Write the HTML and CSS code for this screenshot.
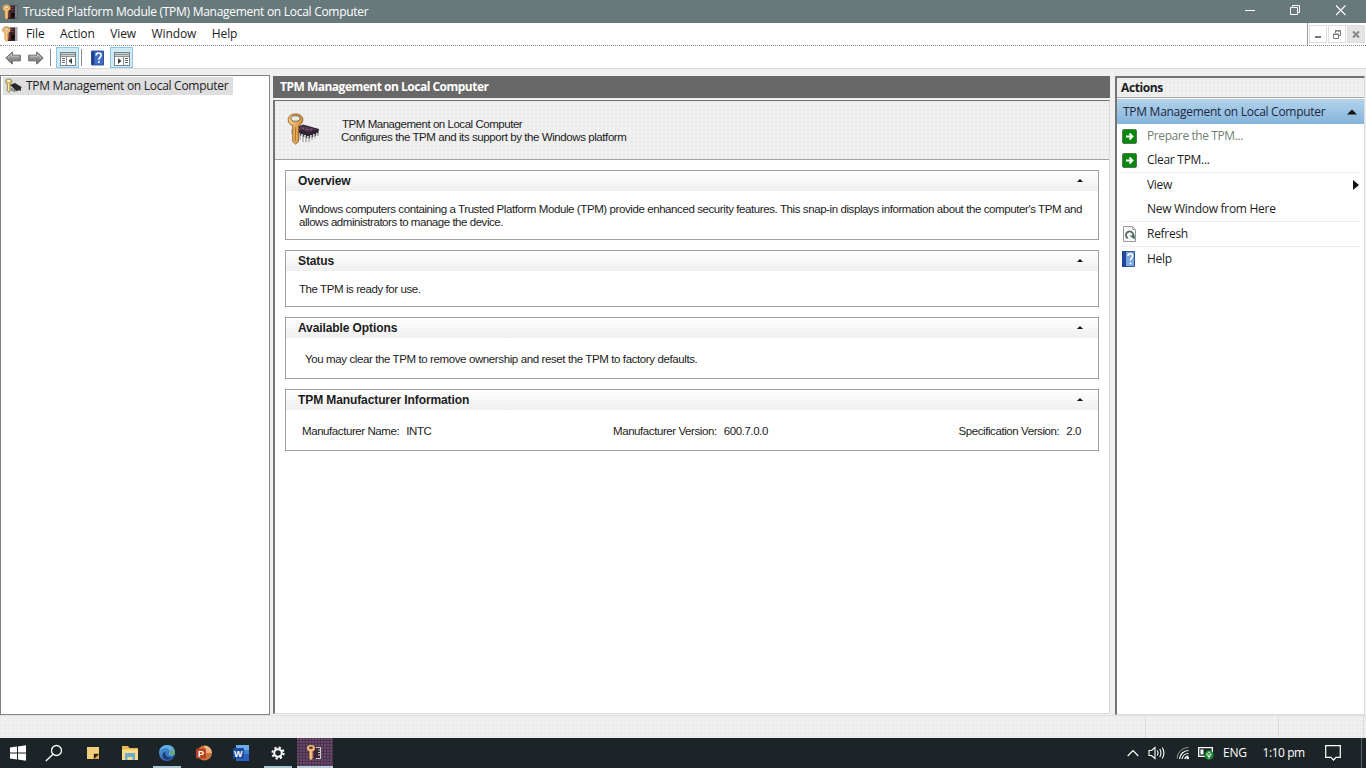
FILE: index.html
```html
<!DOCTYPE html>
<html lang="en">
<head>
<meta charset="utf-8">
<title>TPM Management</title>
<link rel="stylesheet" href="styles.css">
</head>
<body>
<svg width="0" height="0" class="defs">
  <defs>
    <linearGradient id="gold" x1="0" x2="1"><stop offset="0" stop-color="#f9d088"/><stop offset="1" stop-color="#d18f3c"/></linearGradient>
    <linearGradient id="grey" x1="0" x2="0" y1="0" y2="1"><stop offset="0" stop-color="#b4b4b4"/><stop offset="1" stop-color="#727272"/></linearGradient>
    <linearGradient id="edge" x1="0" x2="1" y1="0" y2="1"><stop offset="0" stop-color="#4fa0dc"/><stop offset="1" stop-color="#2752a8"/></linearGradient>
    <symbol id="tpm" viewBox="0 0 16 16">
      <path d="M7 1.500h6v13.500H6z" fill="#38242b"/>
      <path d="M8.500 3.500h3M8.500 5.500h3" stroke="#8c3342"/>
      <path d="M8 8v6" stroke="#7d2636" stroke-width="1.200"/>
      <path d="M12.500 2h3M12.500 4h3M12.500 6h3M12.500 8h3M12.500 10h3M12.500 12h3M12.500 14h3" stroke="#333" stroke-width=".9"/>
      <path d="M13 3h2M13 5h2M13 7h2M13 9h2M13 11h2M13 13h2" stroke="#aaa" stroke-width=".9"/>
      <path d="M9 9h3.500v4.500H9z" fill="#0d0d0d"/>
      <path d="M4.500 .6C2 .6.6 2 .6 4c0 1.500.9 2.600 2.300 3.100V14l1.700 1.500L6 14V7.100C7.500 6.600 8.400 5.500 8.400 4 8.400 2 7 .6 4.500.6z" fill="#f5c37b" stroke="#b5742f" stroke-width=".6"/>
      <ellipse cx="4.500" cy="3.200" rx="2.300" ry="1.200" fill="#f3efe4" stroke="#8a6a3a" stroke-width=".5"/>
    </symbol>
    <symbol id="book" viewBox="0 0 14 16">
      <path d="M.5.500h13v15H.5z" fill="#3f6fc6" stroke="#26458f"/>
      <path d="M1 1h2.500v14H1z" fill="#1d3e8c"/>
      <path d="M5.500 5.200C5.500 3.500 6.700 2.700 8.200 2.700s2.700.9 2.700 2.400c0 2.200-2.500 2.200-2.500 4.700" fill="none" stroke="#fff" stroke-width="1.700"/>
      <path d="M7.500 11.300h1.900v1.900H7.500z" fill="#fff"/>
    </symbol>
    <symbol id="go" viewBox="0 0 15 15">
      <rect x=".5" y=".5" width="14" height="14" rx="1.500" fill="#0a850d" stroke="#4d7d50"/>
      <path d="M4 7.500h6M7.500 4.500l3 3-3 3" fill="none" stroke="#fff" stroke-width="1.800"/>
    </symbol>
    <symbol id="arrow" viewBox="0 0 16 14">
      <path d="M.8 7 7.300.9V4.200H15.300V9.800H7.300V13.100z" fill="url(#grey)" stroke="#666" stroke-width="1"/>
      <path d="M3 6.700 6.500 3.500V5.200H14" fill="none" stroke="#c9c9c9" stroke-width=".8"/>
    </symbol>
  </defs>
</svg>

<div class="screen">
  <header class="titlebar">
    <svg class="ic16"><use href="#tpm"/></svg>
    <span class="title">Trusted Platform Module (TPM) Management on Local Computer</span>
    <svg class="winctl" width="110" height="23" fill="none" stroke="#fff">
      <path d="M5 10.500h10"/><path d="M50.500 7.500h7v7h-7zM52.500 7.500v-2h7v7h-2"/><path d="M96 5.500l9.500 9.500M105.500 5.500 96 15" stroke-width="1.100"/>
    </svg>
  </header>

  <nav class="menubar">
    <svg class="ic16"><use href="#tpm"/></svg>
    <span class="m-file">File</span><span class="m-action">Action</span><span class="m-view">View</span><span class="m-window">Window</span><span class="m-help">Help</span>
    <div class="mdi">
      <i><svg width="17" height="17"><path d="M5 11h6" stroke="#777" stroke-width="2"/></svg></i>
      <i><svg width="17" height="17" fill="none" stroke="#777"><path d="M4.500 8.500h5v4h-5zM4 8h6M6.500 7V5h5v4.500h-2M6 4.700h6"/></svg></i>
      <i class="off"><svg width="17" height="17"><path d="M5 5.500l6 6M11 5.500l-6 6" stroke="#888" stroke-width="2"/></svg></i>
    </div>
  </nav>

  <div class="toolbar">
    <svg class="back" width="16" height="14"><use href="#arrow"/></svg>
    <svg class="fwd" width="16" height="14"><use href="#arrow"/></svg>
    <b class="vsep"></b>
    <span class="tb on"><svg width="16" height="14"><rect x=".5" y=".5" width="15" height="13" fill="#fff" stroke="#7b8285"/><path d="M1 2.500h14" stroke="#8f989b" stroke-width="2"/><path d="M1 4.500h14M6.500 5v8" stroke="#8b9295"/><path d="M2 6.500h3M2 8.500h3M2 10.500h3" stroke="#666"/><path d="M12 6v6L8.500 9z" fill="#444"/></svg></span>
    <b class="vsep second"></b>
    <svg class="help" width="13" height="16" preserveAspectRatio="none"><use href="#book"/></svg>
    <span class="tb on last"><svg width="16" height="14"><rect x=".5" y=".5" width="15" height="13" fill="#fff" stroke="#7b8285"/><path d="M1 2.500h14" stroke="#8f989b" stroke-width="2"/><path d="M1 4.500h14M9.500 5v8" stroke="#8b9295"/><path d="M11 6.500h3M11 8.500h3M11 10.500h3" stroke="#666"/><path d="M4 6v6l3.500-3z" fill="#444"/></svg></span>
  </div>

  <div class="main">
    <aside class="tree">
      <div class="node">
        <svg width="17" height="16" viewBox="0 0 17 16"><path d="M5 7l5-2 6.500 4-1 3-4 1z" fill="#2a2626"/><path d="M7 10v3M9 11v3M11 11.500v2M15.500 10v3" stroke="#444"/><path d="M3.500 1C1.500 1 .6 2 .6 3.500c0 1.200.7 2 1.700 2.300v7L4 14.300l1.200-1.500v-7C6.300 5.400 7 4.600 7 3.500 7 2 5.800 1 3.500 1z" fill="#dcc25c" stroke="#77726a" stroke-width=".7"/><ellipse cx="3.700" cy="2.800" rx="1.500" ry=".9" fill="#fff"/><path d="M3.500 6v7" stroke="#fff3ac"/></svg>
        <span class="tree-text">TPM Management on Local Computer</span>
      </div>
    </aside>

    <section class="center">
      <h1>TPM Management on Local Computer</h1>
      <div class="content">
        <div class="banner">
          <svg width="34" height="34" viewBox="0 0 34 34">
            <path d="M8 15 16 11.500 32 16 31 22 21 26 8 20z" fill="#302334"/>
            <path d="M10 15 16 12.500 29.500 16.300 22 19.500z" fill="#4c3349"/>
            <path d="M11 16l2 .6M15 15l2 .6M19 16l2 .6M23 16l2 .6" stroke="#875c76" stroke-width="1.200"/>
            <path d="M12 20v6M15 21v7M18 22v7M21 23v6M24 22v5M27 21v5M30 20v4M6 16v5" stroke="#f2f2f2" stroke-width="1.600"/>
            <path d="M13 21v6M16 22v7M19 23v6M22 23v6M25 22v5M28 21v4M31 19v4M5 16v5" stroke="#77737a" stroke-width=".8"/>
            <path d="M8.500 1C4 1 1.200 3.200 1.200 6.700c0 3 1.800 5 4.600 6v15.800L8.600 31l2.800-2.500V12.700c2.600-1 4.400-3 4.400-6C15.800 3.200 13 1 8.500 1z" fill="url(#gold)" stroke="#9b6120"/>
            <ellipse cx="8.500" cy="5.500" rx="4.500" ry="2.800" fill="#eeece8" stroke="#6c6049"/>
            <path d="M8.500 14v14" stroke="#b8741f" stroke-width="1.100"/>
          </svg>
          <p><span class="b1">TPM Management on Local Computer</span><span class="b2">Configures the TPM and its support by the Windows platform</span></p>
        </div>

        <div class="cards">
          <article class="overview"><h2><span>Overview</span><i></i></h2>
            <p><span class="o1">Windows computers containing a Trusted Platform Module (TPM) provide enhanced security features. This snap-in displays information about the computer's TPM and</span><span class="o2">allows administrators to manage the device.</span></p></article>
          <article class="status"><h2><span>Status</span><i></i></h2><p><span class="s1">The TPM is ready for use.</span></p></article>
          <article class="options"><h2><span>Available Options</span><i></i></h2><p><span class="a1">You may clear the TPM to remove ownership and reset the TPM to factory defaults.</span></p></article>
          <article class="maker"><h2><span>TPM Manufacturer Information</span><i></i></h2>
            <dl><div class="name"><dt>Manufacturer Name:</dt><dd>INTC</dd></div><div><dt>Manufacturer Version:</dt><dd class="ver">600.7.0.0</dd></div><div class="spec"><dt>Specification Version:</dt><dd>2.0</dd></div></dl></article>
        </div>
      </div>
    </section>

    <aside class="actions">
      <h3>Actions</h3>
      <div class="group"><span>TPM Management on Local Computer</span><svg width="10" height="6"><path d="M0 5.500 5 .5l5 5z" fill="#111"/></svg></div>
      <ul>
        <li class="dim"><svg width="15" height="15"><use href="#go"/></svg><span class="r1">Prepare the TPM...</span></li>
        <li><svg width="15" height="15"><use href="#go"/></svg><span class="r2">Clear TPM...</span></li>
        <li class="line"><b></b><span class="r3">View</span><svg class="more" width="6" height="10"><path d="M0 0l6 5-6 5z" fill="#111"/></svg></li>
        <li><b></b><span class="r4">New Window from Here</span></li>
        <li class="line"><svg width="15" height="16"><path d="M1.500.500h9l3 3v12h-12z" fill="#f8f8f8" stroke="#999"/><path d="M10.500.500v3h3" fill="none" stroke="#aaa"/><path d="M5.800 12.300A3.700 3.700 0 1 1 10.800 11" fill="none" stroke="#55696b" stroke-width="1.800"/><path d="M7.500 9.500h5.200v4z" fill="#2f6a52"/></svg><span class="r5">Refresh</span></li>
        <li class="line"><svg width="15" height="16"><path d="M.5.500h12v15H.5z" fill="#79a7df" stroke="#3156a0"/><path d="M0 0h4v16H0z" fill="#244597"/><path d="M6 5c0-1.500 1-2.300 2.300-2.300s2.300.9 2.300 2.200C10.600 7 8.500 7 8.500 9.500" fill="none" stroke="#fff" stroke-width="1.600"/><path d="M7.600 11.500h1.800v1.800H7.600z" fill="#fff"/></svg><span class="r6">Help</span></li>
      </ul>
    </aside>
  </div>

  <div class="statusbar"><i></i><i></i><i></i></div>

  <footer class="taskbar">
    <div class="apps">
      <span class="start"><svg width="18" height="18"><path d="M1 3.500l7-1v6H1zM9 2.400l8-1.200v7.300H9zM1 9.500h7v6l-7-1zM9 9.500h8v7.300l-8-1.200z" fill="#fff"/></svg></span>
      <span class="search"><svg width="18" height="18" fill="none" stroke="#fff" stroke-width="1.300"><circle cx="11.500" cy="6.500" r="5"/><path d="M8 10.200.9 17"/></svg></span>
      <span><svg width="14" height="14"><path d="M1 1h12v12H1z" fill="#f0d07c"/><path d="M7 7h6v6H7z" fill="#d9ad55"/><path d="M8 8h5l-5 5z" fill="#241f18"/></svg></span>
      <span><svg width="18" height="16"><path d="M1 1h6l1.500 2H17v12H1z" fill="#e9b751"/><path d="M1 4.500h16V15H1z" fill="#f8dc86"/><path d="M4 8h10v7h-2.500v-3h-5v3H4z" fill="#6fa9d6"/></svg></span>
      <span class="run"><svg width="18" height="18"><circle cx="9" cy="9" r="8" fill="url(#edge)"/><path d="M1.300 8C3 3.500 9 3 11 6c1.500 2.300-.7 3.500-.5 4.500.3 1.500 3.500 1.800 6 .2C18 4 13.500 1 9 1 5 1 2 4 1.300 8z" fill="#64aee5"/><path d="M11.500 10.500c-.3-1 1.500-1.500 1-4L16 5.500c1.300 2 1.200 4 .5 5.200-1.500 1-4.500 1-5-.2z" fill="#63aa83"/><path d="M7.500 7.500c-1.500 3 1 7 6.500 6-2.300 2.500-7 3-9 0-1.300-2.500 0-5 2.500-6z" fill="#1b3876"/></svg></span>
      <span><svg width="18" height="18"><circle cx="9.500" cy="9" r="7.500" fill="#c9743f"/><path d="M9.500 1.500A7.500 7.500 0 0 1 17 9H9.500z" fill="#efb384"/><rect x="1" y="4.500" width="10" height="10" rx="1" fill="#b8431c"/><text x="3" y="12.800" class="glyph">P</text></svg></span>
      <span><svg width="18" height="18"><path d="M4 1h13v16H4z" fill="#2a62bd"/><path d="M4 1h13v5H4z" fill="#6daae9"/><path d="M4 6h13v4H4z" fill="#3f83d4"/><rect x="1" y="4" width="11" height="10.500" rx="1" fill="#1d4b9f"/><text x="2" y="12.700" class="glyph">W</text></svg></span>
      <span class="run"><svg width="14" height="14"><circle cx="7" cy="7" r="5.600" fill="none" stroke="#fff" stroke-width="2" stroke-dasharray="2.200 2.198"/><circle cx="7" cy="7" r="3.800" fill="none" stroke="#fff" stroke-width="2"/></svg></span>
      <span class="run active"><svg width="18" height="18"><path d="M8 3.500h6v11H8z" fill="#3c2630"/><path d="M10 3.500h5M14.500 3v12M10 14.500h5M12 6h2M12 8.500h2M12 11h2" stroke="#ccc"/><path d="M5 1C2.500 1 1 2.200 1 4.200c0 1.600 1 2.500 2.400 3v7.300L5 16.200l1.500-1.700V7.200C8 6.700 9 5.800 9 4.200 9 2.200 7.500 1 5 1z" fill="#f6bd74"/><ellipse cx="5" cy="3.800" rx="2" ry="1.200" fill="#5c3545"/></svg></span>
    </div>
    <div class="tray">
      <svg class="chev" width="12" height="8" fill="none" stroke="#fff" stroke-width="1.200"><path d="M.7 7 6 1.500 11.300 7"/></svg>
      <svg class="vol" width="18" height="16" fill="none" stroke="#fff" stroke-width="1.100"><path d="M1 5.500h2.500L7 2.500v11L3.500 10.500H1zM9.200 5.500q1.600 2.500 0 5M11.700 4q2.500 4 0 8M14.200 2.500q3.500 5.500 0 11"/></svg>
      <svg class="wifi" width="14" height="14" fill="none" stroke="#fff"><path d="M1 12.500A11.500 11.500 0 0 1 12.500 1.500" stroke="#999"/><path d="M3.500 13A9 9 0 0 1 12.500 4.500M6 13a6.500 6.500 0 0 1 6.500-5.500M8.700 13a4 4 0 0 1 3.800-3" stroke-width="1.200"/><circle cx="11.700" cy="12" r="1.300" fill="#fff" stroke="none"/></svg>
      <svg class="bat" width="17" height="14"><path d="M.7 1.700h13.600v8.600H.7z" fill="none" stroke="#fff" stroke-width="1.300"/><path d="M2.500 3.500h3v5h-3z" fill="#fff"/><circle cx="11" cy="9" r="4.700" fill="#16872c"/><path d="M11 5.800c2.700 2 2.700 3.700 0 5-2.700-1.300-2.700-3 0-5zM11 8v4.500" fill="none" stroke="#fff"/></svg>
      <span class="lang">ENG</span><span class="clock">1:10 pm</span>
      <svg class="note" width="16" height="16" fill="none" stroke="#fff" stroke-width="1.200"><path d="M.7.700h14.600v11.600h-4.300l-2.500 2.700-2.500-2.700H.7z"/></svg>
      <b class="desk"></b>
    </div>
  </footer>
</div>
</body>
</html>
```

FILE: styles.css
```css
* { box-sizing: border-box; }
body, h1, h2, h3, p, ul, dl, dd { margin: 0; padding: 0; }
body { width: 1366px; height: 768px; overflow: hidden; font: 12px/16px "Open Sans", "Noto Sans", sans-serif; letter-spacing: -.28px; color: #1c1c1c; --grain: radial-gradient(circle at 1px 1px, #eaeaea .7px, transparent .8px) 0 0 / 4px 4px; }
span, dt, dd, h1, h3 { white-space: nowrap; }
svg { display: block; flex: none; }
.defs { position: absolute; }
.ic16 { width: 16px; height: 16px; }
.screen { width: 1366px; height: 768px; display: flex; flex-direction: column; background: #f0f0f0; }

.titlebar { height: 23px; flex: none; background: #68797c; color: #fff; display: flex; align-items: center; padding-left: 2px; }
.title { margin-left: 5px; }
.winctl { margin-left: auto; margin-right: 16px; }

.menubar { height: 23px; flex: none; background: #fff; border-bottom: 1px dotted #888; display: flex; align-items: center; padding-left: 2px; letter-spacing: -.1px; }
.menubar span { margin-right: 15.500px; }
.menubar .m-file { margin-left: 8px; }
.mdi { margin-left: auto; height: 22px; border-left: 1px solid #999; display: flex; gap: 1px; padding: 2px 1px; }
.mdi i { width: 18px; height: 18px; border: 1px solid #ddd; }
.mdi .off { background: #e4e4e4; }

.toolbar { height: 23px; flex: none; background: #fff; border-bottom: 1px solid #dadada; display: flex; align-items: center; padding: 1px 0 0 5px; }
.fwd { transform: scaleX(-1); margin-left: 7px; }
.vsep { width: 1px; height: 17px; background: #8a8a8a; margin-left: 6px; }
.vsep.second { margin-left: 2px; }
.tb { width: 23px; height: 21px; display: grid; place-items: center; border: 1px solid #8cc6e4; background: #cdeaf5; margin-left: 5px; padding-top: 2px; }
.help { margin-left: 9px; }
.last { margin-left: 6px; }

.main { flex: 1; min-height: 0; display: flex; padding: 6px 1px 0 0; }
.tree { width: 270px; height: 640px; background: #fff; border: 1px solid #828282; padding: 1px 2px; }
.node { display: flex; align-items: center; width: 230px; height: 18px; background: #dedede; padding-left: 2px; }
.node span { margin-left: 4px; }

.center { width: 837px; height: 639px; margin-left: 3px; padding-top: 1px; display: flex; flex-direction: column; }
.center h1 { height: 22px; background: #686868; color: #fff; font-size: 12px; line-height: 21px; padding-left: 7px; letter-spacing: -.5px; }
.content { flex: 1; margin-top: 2px; background: #fff; border-left: 2px solid #747474; border-top: 1px solid #747474; border-bottom: 1px solid #dcdcdc; border-right: 1px solid #dcdcdc; font-family: "Liberation Sans", Arial, sans-serif; font-size: 11.500px; line-height: 13px; letter-spacing: -.42px; }
.banner { height: 59px; border-bottom: 1px solid #a2a2a2; background: var(--grain), #f0f0f0; display: flex; padding: 12px 0 0 12px; }
.banner p { padding: 5px 0 0 20px; }
p span { display: block; width: max-content; }
.banner .b1 { margin-left: 1px; letter-spacing: -.46px; }
.cards { padding: 10px 10px 0 10px; display: flex; flex-direction: column; gap: 10px; }
article { border: 1px solid #a0a0a0; }
.overview { height: 70px; } .status { height: 57px; } .options { height: 62px; } .maker { height: 62px; }
h2 { height: 20px; display: flex; justify-content: space-between; align-items: center; font-size: 12px; line-height: 20px; padding: 0 15px 0 12px; background: linear-gradient(#fff, #efefef); letter-spacing: -.1px; }
h2 i { border: 3px solid transparent; border-bottom: 3px solid #111; border-top: 0; margin-bottom: 2px; }
article p { padding: 12px 0 0 13px; }
.options p { padding: 15px 0 0 19px; }
.a1 { letter-spacing: -.39px; }
.o1 { letter-spacing: -.41px; }
.o2 { letter-spacing: -.46px; }
dl { display: flex; padding: 15px 17px 0 16px; }
dl div { display: flex; gap: 7px; }
dl .name { width: 311px; }
dl .spec { margin-left: auto; }

.actions { width: 250px; height: 639px; margin: 1px 0 0 5px; background: #fff; border: 1px solid #dcdcdc; border-left: 2px solid #747474; border-top: 2px solid #747474; }
.actions h3 { height: 20px; font-size: 12px; line-height: 20px; padding-left: 4px; background: var(--grain), #f0f0f0; border-bottom: 1px solid #a6a6a6; letter-spacing: -.4px; }
.group { height: 25px; margin-top: 1px; background: linear-gradient(#b3d3eb, #85b4dc); display: flex; align-items: center; justify-content: space-between; padding: 0 7px 0 6px; color: #1d2740; }
ul { list-style: none; }
li { height: 24px; display: flex; align-items: center; padding: 0 7px 0 5px; }
li b { width: 15px; }
li span { margin-left: 10px; }
.line { height: 25px; border-top: 1px solid #ededed; margin: 0 4px; padding: 0 3px 0 1px; }
.dim { color: #6f7f72; letter-spacing: -.4px; }
.more { margin-left: auto; margin-right: -2px; }

.statusbar { height: 23px; flex: none; display: flex; border-top: 1px solid #e0e0e0; background: var(--grain), #f0f0f0; }
.statusbar i { border-right: 1px solid #dcdcdc; width: 1146px; }
.statusbar i + i { width: 133px; }
.statusbar i + i + i { width: 85px; }

.taskbar { height: 30px; flex: none; background: #1c2427; display: flex; justify-content: space-between; color: #fff; }
.apps { display: flex; }
.apps span { width: 37px; height: 30px; display: grid; place-items: center; }
.apps .start { padding-right: 1px; }
.apps .search { padding-right: 3px; }
.run { background: linear-gradient(#a9c4d3, #a9c4d3) 50% 100% / 28px 2px no-repeat; }
.apps .active { background: linear-gradient(#b5cbd9, #b5cbd9) 50% 100% / 36px 2px no-repeat, radial-gradient(circle at 1px 1px, #6b4a66 .7px, transparent .8px) 0 0 / 3px 3px, #4a3350; width: 36px; margin-left: 1px; }
.glyph { font: bold 9px "Liberation Sans", sans-serif; fill: #fff; letter-spacing: 0; }
.tray { display: flex; align-items: center; width: 239px; }
.vol { margin-left: 9px; } .wifi { margin-left: 10px; } .bat { margin-left: 8px; }
.lang { margin-left: 8px; } .clock { margin-left: 16px; letter-spacing: -.45px; } .note { margin-left: 20px; }
.desk { width: 1px; height: 30px; background: #5a6265; margin-left: auto; margin-right: 4px; }
```
